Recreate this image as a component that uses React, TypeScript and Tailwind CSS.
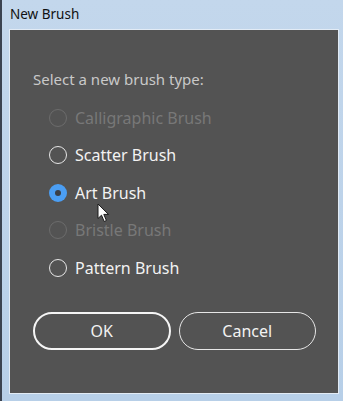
import React from 'react'

type Option = { label: string; disabled?: boolean; checked?: boolean }

const options: Option[] = [
  { label: 'Calligraphic Brush', disabled: true },
  { label: 'Scatter Brush' },
  { label: 'Art Brush', checked: true },
  { label: 'Bristle Brush', disabled: true },
  { label: 'Pattern Brush' },
]

function Radio({ checked, disabled }: { checked?: boolean; disabled?: boolean }) {
  if (checked) {
    return (
      <span className="flex h-[18px] w-[18px] items-center justify-center rounded-full bg-[#4b9ef3]">
        <span className="h-[6px] w-[6px] rounded-full bg-[#3a3f47]" />
      </span>
    )
  }
  return (
    <span
      className={`h-[18px] w-[18px] rounded-full border-[1.5px] ${
        disabled ? 'border-[#6c6c6c]' : 'border-[#e6e6e6]'
      }`}
    />
  )
}

function Cursor() {
  return (
    <svg className="absolute left-[95px] top-[203px]" width="13" height="20" viewBox="0 0 13 20">
      <path
        d="M1 1 L1 15.5 L4.5 12.2 L7.2 18.5 L9.4 17.5 L6.8 11.4 L11.5 11.4 Z"
        fill="#ffffff"
        stroke="#1a1a1a"
        strokeWidth="1"
        strokeLinejoin="round"
      />
    </svg>
  )
}

export default function App() {
  return (
    <div
      className="relative h-[401px] w-[343px] border-l-2 border-[#3b4350] bg-gradient-to-b from-[#c3d7ec] to-[#b7cfe8] pr-[4px] pl-[7px] pb-[7px]"
      style={{ fontFamily: '"Noto Sans", "Open Sans", sans-serif' }}
    >
      <div className="flex h-[29px] items-center pl-[1px] text-[13.5px] text-[#111]">New Brush</div>
      <div className="flex h-[365px] flex-col border border-[#e2ebf5] bg-[#535353] pl-[23px] pr-[22px]">
        <div className="mt-[38px] flex h-[22px] items-center text-[15px] text-[#c9c9c9]">
          Select a new brush type:
        </div>
        <div className="mt-[9px] flex flex-col pl-[16px]">
          {options.map((o) => (
            <div key={o.label} className="flex h-[37.5px] items-center gap-[8px]">
              <Radio checked={o.checked} disabled={o.disabled} />
              <span
                className={`text-[16px] ${o.disabled ? 'text-[#787878]' : 'text-[#f2f2f2]'}`}
              >
                {o.label}
              </span>
            </div>
          ))}
        </div>
        <div className="mt-[25px] flex gap-[8px]">
          <button className="h-[38px] w-[138px] rounded-full border-[2.5px] border-[#f5f5f5] text-[16px] text-[#f2f2f2]">
            OK
          </button>
          <button className="h-[38px] w-[138px] rounded-full border-[1.5px] border-[#e6e6e6] text-[16px] text-[#f2f2f2]">
            Cancel
          </button>
        </div>
      </div>
      <Cursor />
    </div>
  )
}
